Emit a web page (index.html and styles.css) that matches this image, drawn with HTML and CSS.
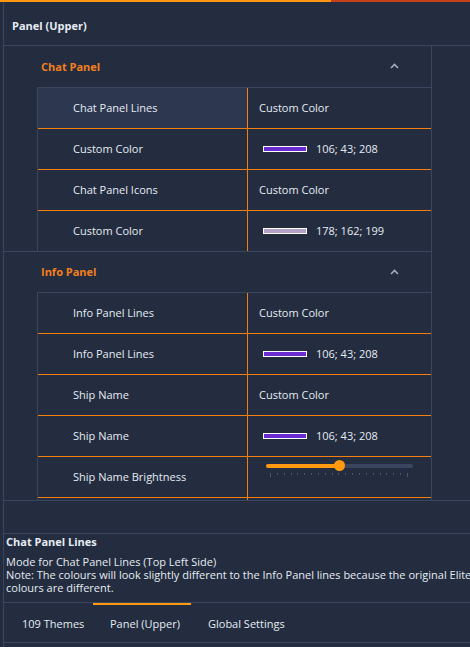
FILE: index.html
```html
<!DOCTYPE html>
<html>
<head>
<meta charset="utf-8">
<link rel="stylesheet" href="styles.css">
</head>
<body>
<div class="topbar"></div>
<div class="app">
  <div class="title">Panel (Upper)</div>
  <div class="main">
    <div class="scroll">
      <section class="sec">
        <div class="sec-head"><span>Chat Panel</span><svg class="chev" width="9" height="6" viewBox="0 0 9 6"><polyline points="1,5 4.5,1.5 8,5" fill="none" stroke="#a4acbc" stroke-width="1.6"/></svg></div>
        <div class="sec-body">
          <div class="row"><div class="cell-l sel">Chat Panel Lines</div><div class="cell-r">Custom Color</div></div>
          <div class="row"><div class="cell-l">Custom Color</div><div class="cell-r"><span class="swatch purple"></span>106; 43; 208</div></div>
          <div class="row"><div class="cell-l">Chat Panel Icons</div><div class="cell-r">Custom Color</div></div>
          <div class="row last"><div class="cell-l">Custom Color</div><div class="cell-r"><span class="swatch lilac"></span>178; 162; 199</div></div>
        </div>
      </section>
      <section class="sec">
        <div class="sec-head short"><span>Info Panel</span><svg class="chev" width="9" height="6" viewBox="0 0 9 6"><polyline points="1,5 4.5,1.5 8,5" fill="none" stroke="#a4acbc" stroke-width="1.6"/></svg></div>
        <div class="sec-body">
          <div class="row"><div class="cell-l">Info Panel Lines</div><div class="cell-r">Custom Color</div></div>
          <div class="row"><div class="cell-l">Info Panel Lines</div><div class="cell-r"><span class="swatch purple"></span>106; 43; 208</div></div>
          <div class="row"><div class="cell-l">Ship Name</div><div class="cell-r">Custom Color</div></div>
          <div class="row"><div class="cell-l">Ship Name</div><div class="cell-r"><span class="swatch purple"></span>106; 43; 208</div></div>
          <div class="row"><div class="cell-l">Ship Name Brightness</div><div class="cell-r slider-cell">
            <div class="slider">
              <div class="track"><div class="fill"></div></div>
              <div class="knob"></div>
              <div class="ticks"><i class="end"></i><i></i><i></i><i></i><i></i><i></i><i></i><i></i><i></i><i></i><i></i><i></i><i></i><i></i><i></i><i></i><i></i><i></i><i></i><i></i><i class="end"></i></div>
            </div>
          </div></div>
          <div class="row"><div class="cell-l"></div><div class="cell-r"></div></div>
        </div>
      </section>
    </div>
  </div>
  <div class="spacer"></div>
  <div class="desc">
    <div class="desc-title">Chat Panel Lines</div>
    <div class="desc-line">Mode for Chat Panel Lines (Top Left Side)</div>
    <div class="desc-line">Note: The colours will look slightly different to the Info Panel lines because the original Elite</div>
    <div class="desc-line">colours are different.</div>
  </div>
  <div class="tabs">
    <div class="tab t1">109 Themes</div>
    <div class="tab t2 active">Panel (Upper)</div>
    <div class="tab t3">Global Settings</div>
  </div>
</div>
</body>
</html>
```
FILE: styles.css
```css
html, body {
  margin: 0;
  padding: 0;
}
body {
  background: #232d3f;
  color: #e6ebf3;
  font-family: "Open Sans", "Noto Sans", sans-serif;
  font-size: 11px;
  width: 470px;
  height: 647px;
  overflow: hidden;
}
.topbar {
  height: 2px;
  background: linear-gradient(to right, #ff9612 0, #ff9612 331px, #c5401b 331px, #c5401b 100%);
}
.app {
  margin-left: 3px;
  border-left: 1px solid #3a4560;
  height: 645px;
  display: flex;
  flex-direction: column;
}
.title {
  height: 43px;
  box-sizing: border-box;
  padding: 3px 0 0 8px;
  display: flex;
  align-items: center;
  font-weight: 700;
}
.main {
  height: 454px;
  border-top: 1px solid #3a4560;
  border-bottom: 1px solid #3a4560;
  display: flex;
  overflow: hidden;
}
.scroll {
  width: 427px;
  border-right: 1px solid #3a4560;
  overflow: hidden;
}
.sec {
  border-bottom: 1px solid #3a4560;
}
.sec-head {
  height: 41px;
  box-sizing: border-box;
  padding: 0 32px 1px 37px;
  display: flex;
  align-items: center;
  justify-content: space-between;
  color: #f47f1c;
  font-weight: 700;
}
.sec-head.short {
  height: 40px;
}
.chev {
  display: block;
}
.sec-body {
  margin-left: 33px;
  border-left: 1px solid #3a4560;
  border-top: 1px solid #3a4560;
}
.row {
  display: flex;
  height: 41px;
  box-sizing: border-box;
  border-bottom: 1px solid #f57f0c;
}
.row.last {
  height: 40px;
  border-bottom: none;
}
.cell-l {
  width: 210px;
  box-sizing: border-box;
  padding: 0 0 2px 35px;
  border-right: 1px solid #f57f0c;
  display: flex;
  align-items: center;
}
.cell-l.sel {
  background: #2d3750;
}
.cell-r {
  flex: 1;
  padding: 0 0 2px 11px;
  display: flex;
  align-items: center;
}
.swatch {
  width: 42px;
  height: 4px;
  border: 1px solid #ffffff;
  margin: 1px 9px 0 4px;
}
.swatch.purple { background: #6a2bd0; }
.swatch.lilac { background: #b2a2c7; }
.slider-cell {
  align-items: flex-start;
  padding-bottom: 0;
}
.slider {
  position: relative;
  width: 147px;
  margin: 7px 0 0 7px;
}
.track {
  height: 4px;
  border-radius: 2px;
  background: #3a4560;
  overflow: hidden;
}
.fill {
  width: 74px;
  height: 100%;
  background: #ff9a0e;
}
.knob {
  position: absolute;
  left: 68px;
  top: -4px;
  width: 11px;
  height: 11px;
  border-radius: 50%;
  background: #ff9a0e;
}
.ticks {
  display: flex;
  justify-content: space-between;
  align-items: flex-start;
  margin: 5px 5px 0 4px;
}
.ticks i {
  display: block;
  width: 1px;
  height: 2px;
  background: #4a566e;
}
.ticks i.end {
  height: 4px;
}
.spacer {
  height: 32px;
}
.desc {
  height: 69px;
  box-sizing: border-box;
  border-top: 1px solid #3a4560;
  padding: 1px 0 0 2px;
  line-height: 13px;
  white-space: nowrap;
  overflow: hidden;
}
.desc-title {
  font-weight: 700;
  margin-bottom: 7px;
}
.tabs {
  height: 41px;
  box-sizing: border-box;
  border-top: 1px solid #3a4560;
  border-bottom: 1px solid #3a4560;
  display: flex;
}
.tab {
  box-sizing: border-box;
  border-top: 2px solid transparent;
  display: flex;
  align-items: center;
  white-space: nowrap;
}
.tab.active {
  border-top-color: #ff9a0e;
}
.t1 { width: 89px; padding-left: 18px; }
.t2 { width: 98px; padding-left: 17px; }
.t3 { padding-left: 17px; }
```
